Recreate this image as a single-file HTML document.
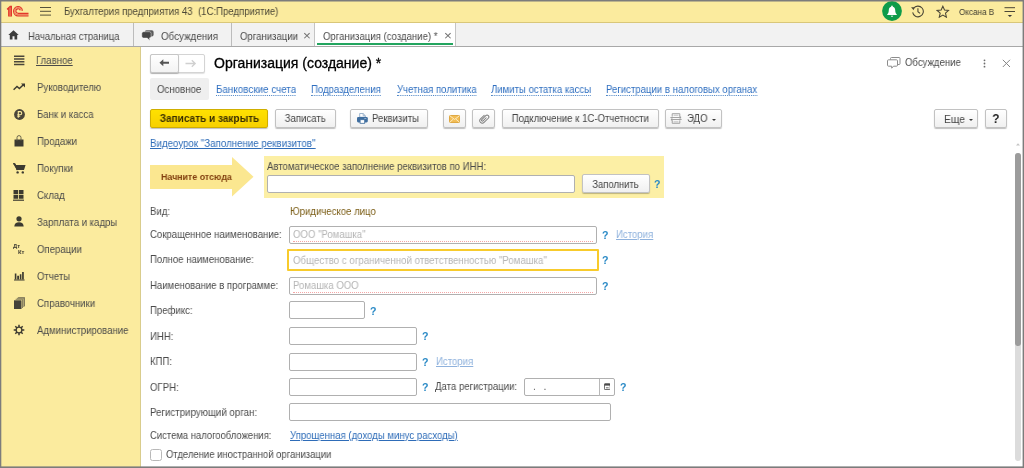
<!DOCTYPE html>
<html><head><meta charset="utf-8">
<style>
*{box-sizing:border-box;margin:0;padding:0}
html,body{width:1024px;height:468px;overflow:hidden;background:#7c7c7c;font-family:"Liberation Sans",sans-serif;font-size:9.6px;color:#4a4a4a}
.a{position:absolute;white-space:nowrap}
.t,.bt,.q,.ttl{will-change:transform}
#app{position:absolute;left:1px;top:1px;width:1022px;height:466px;background:#fff;overflow:hidden}
#top{left:0;top:0;width:1022px;height:21.5px;background:#fbeb9e;border-bottom:1px solid #d9c77a}
#tabs{left:0;top:21.5px;width:1022px;height:24px;background:#f2f2f2;border-bottom:1px solid #a8a8a8}
#side{left:0;top:45.5px;width:139.5px;height:420px;background:#fbeb9e;border-right:1px solid #d9cc8c}
.t{line-height:12px;height:12px;font-size:10.4px;transform:scaleX(.923);transform-origin:0 50%}
.sep{width:1px;background:#bcbcbc;top:22px;height:23px}
.btn{border:1px solid #c2c2c2;border-radius:2px;background:linear-gradient(#ffffff,#f0f0f0);box-shadow:0 1px 1px rgba(0,0,0,.25);height:19.3px;top:108.2px;text-align:center;line-height:17.6px;color:#444}
.bt{display:inline-block;font-size:10.4px;transform:scaleX(.923);transform-origin:50% 50%}
.inp{border:1px solid #b0b0b0;border-radius:2px;background:#fff;height:18px}
.q{color:#2b8ac6;font-weight:bold;font-size:10.6px;line-height:12px}
.lnk{color:#2f6fc0}
.ph{color:#b5b5b5}
.red{border-bottom:1px dotted #f4a6a6;height:1px}
</style></head><body>
<div id="app">
<div id="top" class="a"></div>
<div id="tabs" class="a"></div>
<div id="side" class="a"></div>

<!-- top bar -->
<svg class="a" style="left:0;top:0" width="32" height="21" viewBox="1 1 32 21"><path d="M6.700 8.700L10 5.800h2v10.700H8.100V9.400L7.400 10z" fill="#e2372b"/><path d="M9.400 7.600h1.300v8.300H9.400z" fill="#ee7d5a"/><g fill="none"><path d="M22.400 10.800A4.400 4.650 0 1 0 18 15.850H28.500" stroke="#e2372b" stroke-width="1.250"/><path d="M21.300 10.800A3.300 3.500 0 1 0 18 14.600H28.500" stroke="#ef8560" stroke-width="1.100"/><path d="M20.200 10.300A2.250 2.250 0 1 0 18 13.300H28.500" stroke="#e2372b" stroke-width="1.150"/></g></svg>
<svg class="a" style="left:39px;top:4.9px" width="12" height="11" viewBox="0 0 12 11"><g stroke="#55513a" stroke-width="1"><path d="M0 1.5H11M0 5.3H11M0 9.1H11"/></g></svg>
<div class="a t" style="left:63px;top:5.4px;color:#4a4636">Бухгалтерия предприятия 43&nbsp; (1С:Предприятие)</div>
<!-- bell -->
<svg class="a" style="left:881.4px;top:0.25px" width="20" height="20" viewBox="0 0 20 20"><circle cx="10" cy="10" r="9.9" fill="#0e9b4a"/><g transform="translate(10 10.6) scale(.95) translate(-10 -10)"><path d="M10 3.6c-.5 0-.9.4-.9.9v.3C7.4 5.3 6.6 6.8 6.6 8.6c0 2.6-.8 3.6-1.6 4.3v.6h10v-.6c-.8-.7-1.6-1.7-1.6-4.3 0-1.8-.8-3.3-2.5-3.8v-.3c0-.5-.4-.9-.9-.9z" fill="#fff"/><path d="M8.700 14.300h2.600a1.300 1.100 0 0 1-2.600 0z" fill="#fff"/></g></svg>
<!-- history -->
<svg class="a" style="left:908.7px;top:3.9px" width="15" height="12.900" viewBox="0 0 14 12"><g fill="none" stroke="#4a4636" stroke-width="1"><path d="M3.3 3.2A5 5 0 1 1 2.5 6.8"/><path d="M7.4 3v3.2l2 1.6"/></g><path d="M1 2.2l3.2-.2-.8 2.8z" fill="#4a4636"/></svg>
<!-- star -->
<svg class="a" style="left:934.9px;top:3.5px" width="13.700" height="13.700" viewBox="0 0 13 13"><path d="M6.5 1.2l1.6 3.6 3.8.4-2.9 2.6.9 3.8-3.4-2-3.4 2 .9-3.8L1.1 5.2l3.8-.4z" fill="none" stroke="#4a4636" stroke-width="1"/></svg>
<div class="a t" style="left:957.7px;top:5.3px;font-size:8.7px;color:#3c3a30;transform:scaleX(.935)">Оксана В</div>
<svg class="a" style="left:1003px;top:5px" width="12" height="12" viewBox="0 0 12 12"><path d="M0.500 1.700H11M0.500 5.500H11" stroke="#4a4636" stroke-width="1" fill="none"/><path d="M3.700 8.900h4.400l-2.200 2.200z" fill="#3a3a3a"/></svg>

<!-- tabs -->
<svg class="a" style="left:7px;top:28.5px" width="11" height="10" viewBox="0 0 11 10"><path d="M5.5 0.3L0.3 5h1.5v4.5h2.7V6.3h2V9.5h2.7V5h1.5z" fill="#3c3c3c"/></svg>
<div class="a t" style="left:26.9px;top:29.7px;transform:scaleX(.91)">Начальная страница</div>
<div class="a sep" style="left:131.8px"></div>
<svg class="a" style="left:140px;top:28px" width="14" height="13" viewBox="0 0 14 13"><rect x="3.700" y="1.200" width="8.900" height="6.400" rx="1.800" fill="#5c5c5c"/><path d="M2.600 2.700h5.700a1.800 1.800 0 0 1 1.800 1.800v2.800a1.800 1.800 0 0 1-1.800 1.800H8.600l.2 2.400-2.600-2.400H2.600a1.800 1.800 0 0 1-1.800-1.800V4.500a1.800 1.800 0 0 1 1.800-1.800z" fill="#444" stroke="#f2f2f2" stroke-width=".5"/></svg>
<div class="a t" style="left:160px;top:29.7px;transform:scaleX(.944)">Обсуждения</div>
<div class="a sep" style="left:229.7px"></div>
<div class="a t" style="left:239px;top:29.7px">Организации</div>
<div class="a t" style="left:301.5px;top:28.7px;font-size:13.5px;color:#707070;transform:none">×</div>
<div class="a" style="left:313px;top:22px;width:141.6px;height:22.5px;background:#fff;border-left:1px solid #c4c4c4;border-right:1px solid #c4c4c4"></div>
<div class="a" style="left:316.2px;top:42.4px;width:136.3px;height:2px;background:#23a55f"></div>
<div class="a t" style="left:322px;top:29.7px">Организация (создание) *</div>
<div class="a t" style="left:442.5px;top:28.7px;font-size:13.5px;color:#707070;transform:none">×</div>

<!-- sidebar -->
<div id="sb"></div>
<svg class="a" style="left:12.5px;top:54px" width="11" height="11" viewBox="0 0 11 11"><path d="M0 1.2H10.4M0 4H10.4M0 6.8H10.4M0 9.6H10.4" stroke="#4a463a" stroke-width="1.5"/></svg>
<div class="a t" style="left:35.4px;top:53.9px;text-decoration:underline">Главное</div>
<svg class="a" style="left:12px;top:82px" width="13" height="8" viewBox="0 0 13 8"><path d="M0.6 6.8L4 3.4l2.4 2.2L10.6 1.4" fill="none" stroke="#3c3a30" stroke-width="1.4"/><path d="M8 0.6h4v4z" fill="#3c3a30"/></svg>
<div class="a t" style="left:35.6px;top:80.8px">Руководителю</div>
<svg class="a" style="left:12.5px;top:108px" width="11" height="11" viewBox="0 0 11 11"><circle cx="5.5" cy="5.5" r="5.4" fill="#4a463a"/><path d="M4.3 8.8V2.6h1.9a1.5 1.5 0 0 1 0 3.1H3.3M3.3 7.2H6.2" fill="none" stroke="#fbeb9e" stroke-width="1.1"/></svg>
<div class="a t" style="left:35.6px;top:107.8px">Банк и касса</div>
<svg class="a" style="left:13px;top:134px" width="10" height="12" viewBox="0 0 10 12"><path d="M0.5 4.5h9v7h-9z" fill="#3c3a30"/><path d="M3 6V2.6a2 2 0 0 1 4 0V6" fill="none" stroke="#5c5844" stroke-width=".9"/></svg>
<div class="a t" style="left:35.6px;top:135.2px">Продажи</div>
<svg class="a" style="left:11.5px;top:162px" width="13" height="11" viewBox="0 0 13 11"><path d="M0 0.6h2.2l.6 1.4H12.6l-1.6 5H3.8z" fill="#3c3a30"/><path d="M0 0.7h2l2 6.5" fill="none" stroke="#3c3a30" stroke-width="1"/><circle cx="4.6" cy="9.4" r="1.2" fill="#3c3a30"/><circle cx="9.8" cy="9.4" r="1.2" fill="#3c3a30"/></svg>
<div class="a t" style="left:35.6px;top:162.2px">Покупки</div>
<svg class="a" style="left:11.7px;top:188.5px" width="11" height="11" viewBox="0 0 11 11"><path d="M0.5 0h4.6v4h-4.6zM5.9 0h4.6v4h-4.6zM0.5 4.8h4.6v4h-4.6zM5.9 4.8h4.6v4h-4.6z" fill="#3c3a30"/><path d="M0 10.2H11" stroke="#3c3a30" stroke-width="1.2"/></svg>
<div class="a t" style="left:35.6px;top:189.2px">Склад</div>
<svg class="a" style="left:13px;top:215px" width="10" height="11" viewBox="0 0 10 11"><circle cx="5" cy="2.8" r="2.6" fill="#3c3a30"/><path d="M0.3 10.6c0-3 2-4.4 4.7-4.4s4.7 1.4 4.7 4.4z" fill="#3c3a30"/></svg>
<div class="a t" style="left:35.6px;top:216.2px">Зарплата и кадры</div>
<div class="a ttl" style="left:12.4px;top:242.4px;font-size:5.9px;font-weight:bold;line-height:6px;color:#3c3a30">Дт</div><div class="a ttl" style="left:16.9px;top:248.3px;font-size:5.9px;font-weight:bold;line-height:6px;color:#3c3a30">Кт</div>
<div class="a t" style="left:35.6px;top:243.2px">Операции</div>
<svg class="a" style="left:12.5px;top:270px" width="11" height="10" viewBox="0 0 11 10"><path d="M0.8 2.6h1.6v6h-1.6zM3.2 4.8h1.8v3.800h-1.8zM5.8 3.2h1.6v5.400h-1.6zM8.1 1h1.7v7.600h-1.7z" fill="#3c3a30"/><path d="M0 9H10.600" stroke="#3c3a30" stroke-width="1"/></svg>
<div class="a t" style="left:35.6px;top:270.2px">Отчеты</div>
<svg class="a" style="left:12.5px;top:295.5px" width="11" height="13" viewBox="0 0 11 13"><path d="M0 3.300h7.500v8.700h-7.500z" fill="#45423a"/><path d="M1.600 2.300h6.900V11M2.900 1.300h6.900V10M4.100 .4h6.400V9.200" fill="none" stroke="#5a5646" stroke-width=".7"/></svg>
<div class="a t" style="left:35.6px;top:297.2px">Справочники</div>
<svg class="a" style="left:11.7px;top:322.7px" width="12" height="12" viewBox="0 0 12 12"><g stroke="#3c3a30" stroke-width="1.5"><path d="M6 0.700V11.300M0.700 6H11.300M2.300 2.300L9.700 9.700M9.700 2.300L2.300 9.700"/></g><circle cx="6" cy="6" r="3.500" fill="#3c3a30"/><circle cx="6" cy="6" r="2.200" fill="#fbeb9e"/></svg>
<div class="a t" style="left:35.6px;top:324.2px">Администрирование</div>

<!-- content header -->
<div class="a" style="left:149px;top:52.5px;width:55px;height:19px;border:1px solid #d4d4d4;border-radius:2px;background:#fff;box-shadow:0 1px 1px rgba(0,0,0,.12)"></div>
<div class="a" style="left:149px;top:52.5px;width:28.5px;height:19px;border:1px solid #c6c6c6;border-radius:2px;background:linear-gradient(#fff,#f3f3f3);box-shadow:0 1px 1px rgba(0,0,0,.22)"></div>
<svg class="a" style="left:157.7px;top:58px" width="10.8" height="7.6" viewBox="0 0 12 9" preserveAspectRatio="none"><path d="M4.8 0.3L0.5 4.5l4.3 4.2V5.6H11.5V3.4H4.8z" fill="#555"/></svg>
<svg class="a" style="left:184px;top:57.5px" width="12" height="9" viewBox="0 0 12 9"><path d="M0.5 4.5H10M6.8 1.2l3.4 3.3-3.4 3.3" fill="none" stroke="#d0d0d0" stroke-width="1.3"/></svg>
<div class="a ttl" style="left:212.5px;top:53.2px;font-size:14px;line-height:18px;color:#000;-webkit-text-stroke:.3px #000">Организация (создание) *</div>

<svg class="a" style="left:886px;top:56px" width="14" height="12" viewBox="0 0 14 12"><g fill="none" stroke="#8c8c8c" stroke-width="1"><path d="M3.5 2.5V1.5a1 1 0 0 1 1-1h7.5a1 1 0 0 1 1 1v5a1 1 0 0 1-1 1h-1"/><path d="M1.5 2.8h8a1 1 0 0 1 1 1v4.4a1 1 0 0 1-1 1H6.5l-1.8 2v-2H1.5a1 1 0 0 1-1-1V3.8a1 1 0 0 1 1-1z"/></g></svg>
<div class="a t" style="left:903.5px;top:56.4px">Обсуждение</div>
<svg class="a" style="left:982px;top:57.5px" width="3" height="9" viewBox="0 0 3 9"><circle cx="1.5" cy="1.3" r=".9" fill="#6c6c6c"/><circle cx="1.5" cy="4.5" r=".9" fill="#6c6c6c"/><circle cx="1.5" cy="7.7" r=".9" fill="#6c6c6c"/></svg>
<svg class="a" style="left:1001.1px;top:57.6px" width="9" height="9" viewBox="0 0 9 9"><path d="M0.8 0.8L8 8M8 0.8L0.8 8" stroke="#858585" stroke-width="1"/></svg>

<!-- sub tabs -->
<div class="a" style="left:149px;top:77.4px;width:58.5px;height:21.2px;background:#efefef;border-radius:2px"></div>
<div class="a t" style="left:156.3px;top:83px;transform:scaleX(.932)">Основное</div>
<div class="a t lnk" style="left:214.8px;transform:scaleX(.946);top:83px;border-bottom:1px dotted #4f86c6;height:12px">Банковские счета</div>
<div class="a t lnk" style="left:310.3px;top:83px;border-bottom:1px dotted #4f86c6;height:12px">Подразделения</div>
<div class="a t lnk" style="left:395.8px;top:83px;border-bottom:1px dotted #4f86c6;height:12px">Учетная политика</div>
<div class="a t lnk" style="left:490.3px;top:83px;border-bottom:1px dotted #4f86c6;height:12px">Лимиты остатка кассы</div>
<div class="a t lnk" style="left:605.4px;top:83px;border-bottom:1px dotted #4f86c6;height:12px">Регистрации в налоговых органах</div>

<!-- buttons -->
<div class="a btn" style="left:149px;width:118px;background:linear-gradient(#ffe100,#f7d000);border-color:#cfae00;font-weight:bold;color:#3a3000"><span class="bt" style="transform:scaleX(.966)">Записать и закрыть</span></div>
<div class="a btn" style="left:273.7px;width:61px"><span class="bt">Записать</span></div>
<div class="a btn" style="left:348.8px;width:78.7px;text-align:left;padding-left:21.6px"><span class="bt" style="transform-origin:0 50%">Реквизиты</span></div>
<svg class="a" style="left:355.600px;top:112.100px" width="11" height="11" viewBox="0 0 11 11"><path d="M2.700 4.200V0.500h3.400l2.200 2.200V4.200z" fill="#fff" stroke="#86a3c2" stroke-width=".8"/><path d="M6.100 .5v2.200h2.200" fill="none" stroke="#86a3c2" stroke-width=".7"/><rect x="0" y="3.900" width="10.800" height="5.500" rx="1.300" fill="#3f6e9f"/><rect x="7.300" y="5" width="2" height=".7" fill="#b5cbe0"/><rect x="3.100" y="6.700" width="4.600" height="3.600" fill="#fff" stroke="#3f6e9f" stroke-width=".8"/></svg>
<div class="a btn" style="left:441.7px;width:23.3px"></div>
<svg class="a" style="left:447.9px;top:113.9px" width="11.200" height="8" viewBox="0 0 12 9" preserveAspectRatio="none"><rect x=".5" y=".5" width="11" height="8" rx="1.200" fill="#f2bd55" stroke="#dba034"/><path d="M1 1l5 4 5-4M1 8l3.6-3.4M11 8L7.4 4.6" fill="none" stroke="#fff3d6" stroke-width=".9"/></svg>
<div class="a btn" style="left:471.2px;width:22.7px"></div>
<svg class="a" style="left:477.6px;top:112px" width="11" height="11" viewBox="0 0 11 11"><g transform="rotate(45 5.5 5.5)" fill="none" stroke="#7d7d7d" stroke-width=".95"><path d="M3 3v5.600a2.500 2.500 0 0 0 5 0V2.600a1.800 1.800 0 0 0-3.600 0v5.600a.9.9 0 0 0 1.800 0V3.400"/></g></svg>
<div class="a btn" style="left:501px;width:156.5px"><span class="bt">Подключение к 1С-Отчетности</span></div>
<div class="a btn" style="left:664.2px;width:56.8px;text-align:left;padding-left:21px"><span class="bt" style="transform-origin:0 50%">ЭДО</span></div>
<svg class="a" style="left:669px;top:112.4px" width="12" height="11" viewBox="0 0 12 11"><g fill="none" stroke="#9a9a9a" stroke-width=".9"><path d="M2.200 3.600V0.700h7.600V3.600M2.200 7.400v2.900h7.600V7.400"/><path d="M3.600 2.200h4.800M3.600 8.900h4.800" stroke="#b8b8b8"/><path d="M0.400 4.500h10.600M11.600 6.500H1"/><path d="M9.400 3l1.700 1.500-1.700 1.500M2.600 5L.9 6.500 2.600 8"/></g></svg>
<svg class="a" style="left:711.4px;top:118px" width="4" height="2" viewBox="0 0 4 2"><path d="M0 0h4L2 2z" fill="#3a3a3a"/></svg>
<div class="a btn" style="left:932.5px;width:44.6px;text-align:left;padding-left:9.6px"><span class="bt" style="transform-origin:0 50%;font-size:11.2px;position:relative;top:.6px">Еще</span></div>
<svg class="a" style="left:967.7px;top:118px" width="4" height="2" viewBox="0 0 4 2"><path d="M0 0h4L2 2z" fill="#3a3a3a"/></svg>
<div class="a btn" style="left:984px;width:22.4px;font-weight:bold;color:#222"><span class="bt" style="font-size:12.6px;position:relative;top:.9px">?</span></div>

<div class="a t" style="left:149px;top:137.1px;color:#2e6cb8;text-decoration:underline;text-underline-offset:.5px;transform:scaleX(.936)">Видеоурок "Заполнение реквизитов"</div>

<!-- yellow box -->
<svg class="a" style="left:149px;top:156px" width="105" height="40" viewBox="0 0 105 40"><path d="M0 8h82V0l21.5 19.8L82 39.5V32H0z" fill="#fbe790"/></svg>
<div class="a t" style="left:159.600px;top:170.200px;font-weight:bold;color:#82400f;font-size:9.700px;transform:scaleX(.912)">Начните отсюда</div>
<div class="a" style="left:263px;top:155px;width:399.5px;height:41.5px;background:#fcefa5"></div>
<div class="a t" style="left:266px;top:159.5px">Автоматическое заполнение реквизитов по ИНН:</div>
<div class="a inp" style="left:266px;top:174px;width:307.5px"></div>
<div class="a btn" style="left:581px;top:173px;width:67.5px;height:18.6px;line-height:17px"><span class="bt" style="position:relative;top:.8px;transform:scaleX(.91)">Заполнить</span></div>
<div class="a q" style="left:653px;top:177.300px">?</div>

<!-- fields -->
<div class="a t" style="left:148.6px;top:205px">Вид:</div>
<div class="a t" style="left:289px;top:205px;color:#7a5c14">Юридическое лицо</div>

<div class="a t" style="left:148.6px;top:227.5px">Сокращенное наименование:</div>
<div class="a inp" style="left:288.2px;top:224.5px;width:307.5px"></div>
<div class="a t ph" style="left:292px;top:228px">ООО "Ромашка"</div>
<div class="a red" style="left:292px;top:240px;width:300px"></div>
<div class="a q" style="left:600.5px;top:227.5px">?</div>
<div class="a t" style="left:615px;top:227.5px;color:#8fb2dd;text-decoration:underline">История</div>

<div class="a t" style="left:148.6px;top:253px">Полное наименование:</div>
<div class="a inp" style="left:286px;top:247.5px;width:312px;height:22.5px;border:2px solid #f8cb2c;border-radius:1px"></div>
<div class="a t ph" style="left:292px;top:253.5px;transform:scaleX(.934)">Общество с ограниченной ответственностью "Ромашка"</div>
<div class="a q" style="left:600.5px;top:253px">?</div>

<div class="a t" style="left:148.6px;top:278.5px">Наименование в программе:</div>
<div class="a inp" style="left:288.2px;top:275.5px;width:307.5px"></div>
<div class="a t ph" style="left:292px;top:279px">Ромашка ООО</div>
<div class="a red" style="left:292px;top:291px;width:300px"></div>
<div class="a q" style="left:600.5px;top:278.5px">?</div>

<div class="a t" style="left:148.6px;top:304.4px">Префикс:</div>
<div class="a inp" style="left:288.2px;top:300.2px;width:75.5px"></div>
<div class="a q" style="left:368.5px;top:304px">?</div>

<div class="a t" style="left:148.6px;top:329.6px">ИНН:</div>
<div class="a inp" style="left:288.2px;top:326px;width:127.5px"></div>
<div class="a q" style="left:421px;top:329px">?</div>

<div class="a t" style="left:148.6px;top:354.5px">КПП:</div>
<div class="a inp" style="left:288.2px;top:351.5px;width:127.5px"></div>
<div class="a q" style="left:421px;top:354.5px">?</div>
<div class="a t" style="left:435px;top:354.5px;color:#8fb2dd;text-decoration:underline">История</div>

<div class="a t" style="left:148.6px;top:380.6px">ОГРН:</div>
<div class="a inp" style="left:288.2px;top:376.5px;width:127.5px"></div>
<div class="a q" style="left:421px;top:380px">?</div>
<div class="a t" style="left:434px;top:380px">Дата регистрации:</div>
<div class="a inp" style="left:522.5px;top:377px;width:91px"></div>
<div class="a" style="left:598px;top:377.5px;width:1px;height:17px;background:#b8b8b8"></div>
<div class="a t" style="left:532px;top:380px;color:#555">.&nbsp;&nbsp;&nbsp;.</div>
<svg class="a" style="left:602.6px;top:382.3px" width="6.6" height="7" viewBox="0 0 8 8" preserveAspectRatio="none"><rect x=".5" y=".8" width="7" height="6.7" rx=".8" fill="#fff" stroke="#4a4a4a" stroke-width="1"/><path d="M0.5 1h7v2h-7z" fill="#4a4a4a"/><path d="M2.3 4.6h3.4v1.6H2.3z" fill="#9a9a9a"/></svg>
<div class="a q" style="left:619px;top:380px">?</div>

<div class="a t" style="left:148.6px;top:405.5px;transform:scaleX(.934)">Регистрирующий орган:</div>
<div class="a inp" style="left:288.2px;top:402.2px;width:322.2px"></div>

<div class="a t" style="left:148.6px;top:429px;transform:scaleX(.91)">Система налогообложения:</div>
<div class="a t" style="left:289px;top:429px;color:#2e6cb8;text-decoration:underline">Упрощенная (доходы минус расходы)</div>

<div class="a" style="left:149.3px;top:448.2px;width:11.6px;height:11.5px;border:1px solid #b8b8b8;border-radius:2.5px;background:#fff"></div>
<div class="a t" style="left:165.2px;top:448px;transform:scaleX(.912)">Отделение иностранной организации</div>

<!-- scrollbar -->
<svg class="a" style="left:1015px;top:142px" width="4" height="3" viewBox="0 0 4 3"><path d="M2 0.300L4 2.600H0z" fill="#c4c4c4"/></svg>
<div class="a" style="left:1014px;top:152px;width:6px;height:308px;background:#dcdcdc;border-radius:3px"></div>
<div class="a" style="left:1014px;top:152px;width:6px;height:193px;background:#9c9c9c;border-radius:3px"></div>
</div>
<svg style="position:absolute;left:0;top:0" width="1024" height="468" viewBox="0 0 1024 468"><g fill="#7c7c7c"><rect x="0" y="0" width="1024" height="1.5"/><rect x="0" y="0" width="1.3" height="468"/><rect x="1022.600" y="0" width="1.400" height="468"/><rect x="0" y="466.400" width="1024" height="1.600"/></g></svg>
</body></html>
